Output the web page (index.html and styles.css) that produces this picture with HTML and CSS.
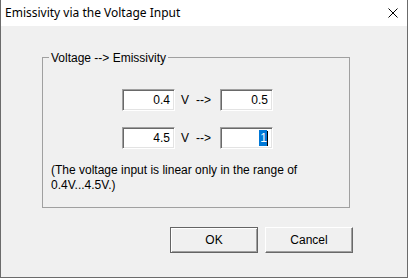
FILE: index.html
```html
<!DOCTYPE html>
<html lang="en">
<head>
    <meta charset="UTF-8">
    <title>Emissivity via the Voltage Input</title>
    <link rel="stylesheet" href="styles.css">
</head>
<body>
    <div class="window">
        <div class="titlebar">
            <span class="title">Emissivity via the Voltage Input</span>
            <svg class="close" width="10" height="10" viewBox="0 0 10 10">
                <path d="M0.5 0.5 L9.5 9.5 M9.5 0.5 L0.5 9.5" stroke="#000" stroke-width="1" fill="none"/>
            </svg>
        </div>
        <div class="content">
            <div class="group">
                <span class="group-title">Voltage --&gt; Emissivity</span>
                <div class="row">
                    <div class="field">0.4</div>
                    <span class="unit">V</span>
                    <span class="arrow">--&gt;</span>
                    <div class="field">0.5</div>
                </div>
                <div class="row">
                    <div class="field">4.5</div>
                    <span class="unit">V</span>
                    <span class="arrow">--&gt;</span>
                    <div class="field"><span class="sel">1</span><span class="caret"></span></div>
                </div>
                <p class="note">(The voltage input is linear only in the range of<br>0.4V...4.5V.)</p>
            </div>
            <div class="buttons">
                <button class="btn default">OK</button>
                <button class="btn">Cancel</button>
            </div>
        </div>
    </div>
</body>
</html>
```

FILE: styles.css
```css
body {
    margin: 0;
    background-color: #f0f0f0;
    font-family: "Liberation Sans", Arial, sans-serif;
    font-size: 12px;
    color: #000;
}
.window {
    width: 408px;
    height: 278px;
    box-sizing: border-box;
    border: 1px solid #6b6b6b;
    border-top: none;
    background-color: #f0f0f0;
}
.titlebar {
    height: 26px;
    background-color: #fff;
    display: flex;
    align-items: center;
    justify-content: space-between;
    padding: 0 9px 0 4px;
}
.title {
    font-family: "Noto Sans", sans-serif;
    font-size: 12px;
    line-height: 16px;
}
.close {
    display: block;
}
.content {
    padding: 31px 0 0 41px;
}
.group {
    width: 308px;
    height: 151px;
    box-sizing: border-box;
    border: 1px solid #a0a0a0;
}
.group-title {
    display: inline-block;
    margin: -7px 0 0 6px;
    padding: 0 2px;
    line-height: 14px;
    background-color: #f0f0f0;
    vertical-align: top;
}
.row {
    display: grid;
    grid-template-columns: 53px 21px 24px 53px;
    align-items: center;
    margin-left: 79px;
    margin-top: 17px;
}
.row + .row {
    margin-top: 16px;
}
.field {
    height: 22px;
    box-sizing: border-box;
    border: 1px solid;
    border-color: #a0a0a0 #fff #fff #a0a0a0;
    box-shadow: inset 1px 1px #696969, inset -1px -1px #e3e3e3;
    background-color: #fff;
    display: flex;
    align-items: center;
    justify-content: flex-end;
    padding-right: 4px;
    line-height: 14px;
}
.unit {
    padding-left: 6px;
}
.sel {
    background-color: #0078d7;
    color: #fff;
    padding: 1px 0 1px 1px;
}
.caret {
    width: 1px;
    height: 15px;
    background-color: #000;
}
.note {
    margin: 14px 0 0 8px;
    line-height: 15px;
}
.buttons {
    display: flex;
    gap: 7px;
    margin: 19px 0 0 128px;
}
.btn {
    width: 88px;
    height: 26px;
    box-sizing: border-box;
    font-family: "Liberation Sans", Arial, sans-serif;
    font-size: 12px;
    color: #000;
    background-color: #f0f0f0;
    border: 1px solid;
    border-color: #fff #696969 #696969 #fff;
    box-shadow: inset -1px -1px #a0a0a0;
    padding: 0;
}
.btn.default {
    border-color: #646464;
    box-shadow: inset 1px 1px #fff, inset -1px -1px #a0a0a0;
}
```
